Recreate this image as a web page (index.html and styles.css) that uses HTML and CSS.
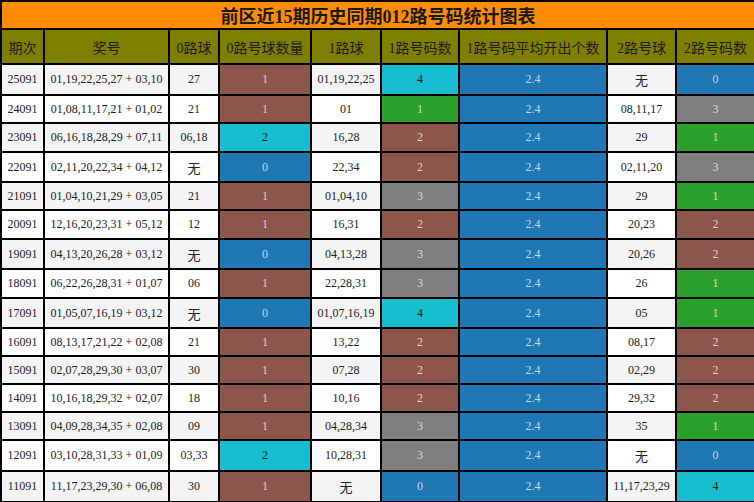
FILE: index.html
```html
<!DOCTYPE html>
<html lang="zh">
<head>
<meta charset="utf-8">
<title>前区近15期历史同期012路号码统计图表</title>
<link rel="stylesheet" href="styles.css">
</head>
<body>
<table class="chart">
  <colgroup>
    <col class="c1"><col class="c2"><col class="c3"><col class="c4"><col class="c5"><col class="c6"><col class="c7"><col class="c8"><col class="c9">
  </colgroup>
  <thead>
    <tr class="title-row"><th colspan="9" class="title">前区近15期历史同期012路号码统计图表</th></tr>
    <tr class="head-row">
      <th>期次</th><th>奖号</th><th>0路球</th><th>0路号球数量</th><th>1路球</th><th>1路号码数</th><th>1路号码平均开出个数</th><th>2路号球</th><th>2路号码数</th>
    </tr>
  </thead>
  <tbody>
    <tr class="odd tall"><td>25091</td><td>01,19,22,25,27 + 03,10</td><td>27</td><td class="brown">1</td><td>01,19,22,25</td><td class="cyan">4</td><td class="blue">2.4</td><td class="cjk">无</td><td class="blue">0</td></tr>
    <tr class="even"><td>24091</td><td>01,08,11,17,21 + 01,02</td><td>21</td><td class="brown">1</td><td>01</td><td class="green">1</td><td class="blue">2.4</td><td>08,11,17</td><td class="gray">3</td></tr>
    <tr class="odd mid"><td>23091</td><td>06,16,18,28,29 + 07,11</td><td>06,18</td><td class="cyan">2</td><td>16,28</td><td class="brown">2</td><td class="blue">2.4</td><td>29</td><td class="green">1</td></tr>
    <tr class="even tall2"><td>22091</td><td>02,11,20,22,34 + 04,12</td><td class="cjk">无</td><td class="blue">0</td><td>22,34</td><td class="brown">2</td><td class="blue">2.4</td><td>02,11,20</td><td class="gray">3</td></tr>
    <tr class="odd"><td>21091</td><td>01,04,10,21,29 + 03,05</td><td>21</td><td class="brown">1</td><td>01,04,10</td><td class="gray">3</td><td class="blue">2.4</td><td>29</td><td class="green">1</td></tr>
    <tr class="even mid"><td>20091</td><td>12,16,20,23,31 + 05,12</td><td>12</td><td class="brown">1</td><td>16,31</td><td class="brown">2</td><td class="blue">2.4</td><td>20,23</td><td class="brown">2</td></tr>
    <tr class="odd tall2"><td>19091</td><td>04,13,20,26,28 + 03,12</td><td class="cjk">无</td><td class="blue">0</td><td>04,13,28</td><td class="gray">3</td><td class="blue">2.4</td><td>20,26</td><td class="brown">2</td></tr>
    <tr class="even mid"><td>18091</td><td>06,22,26,28,31 + 01,07</td><td>06</td><td class="brown">1</td><td>22,28,31</td><td class="gray">3</td><td class="blue">2.4</td><td>26</td><td class="green">1</td></tr>
    <tr class="odd tall2"><td>17091</td><td>01,05,07,16,19 + 03,12</td><td class="cjk">无</td><td class="blue">0</td><td>01,07,16,19</td><td class="cyan">4</td><td class="blue">2.4</td><td>05</td><td class="green">1</td></tr>
    <tr class="even"><td>16091</td><td>08,13,17,21,22 + 02,08</td><td>21</td><td class="brown">1</td><td>13,22</td><td class="brown">2</td><td class="blue">2.4</td><td>08,17</td><td class="brown">2</td></tr>
    <tr class="odd"><td>15091</td><td>02,07,28,29,30 + 03,07</td><td>30</td><td class="brown">1</td><td>07,28</td><td class="brown">2</td><td class="blue">2.4</td><td>02,29</td><td class="brown">2</td></tr>
    <tr class="even"><td>14091</td><td>10,16,18,29,32 + 02,07</td><td>18</td><td class="brown">1</td><td>10,16</td><td class="brown">2</td><td class="blue">2.4</td><td>29,32</td><td class="brown">2</td></tr>
    <tr class="odd"><td>13091</td><td>04,09,28,34,35 + 02,08</td><td>09</td><td class="brown">1</td><td>04,28,34</td><td class="gray">3</td><td class="blue">2.4</td><td>35</td><td class="green">1</td></tr>
    <tr class="even tall"><td>12091</td><td>03,10,28,31,33 + 01,09</td><td>03,33</td><td class="cyan">2</td><td>10,28,31</td><td class="gray">3</td><td class="blue">2.4</td><td class="cjk">无</td><td class="blue">0</td></tr>
    <tr class="odd tall"><td>11091</td><td>11,17,23,29,30 + 06,08</td><td>30</td><td class="brown">1</td><td class="cjk">无</td><td class="blue">0</td><td class="blue">2.4</td><td>11,17,23,29</td><td class="cyan">4</td></tr>
  </tbody>
</table>
</body>
</html>
```
FILE: styles.css
```css
html, body {
  margin: 0;
  padding: 0;
  background: #ffffff;
}

.chart {
  width: 754px;
  table-layout: fixed;
  border-collapse: collapse;
  font-family: "Liberation Serif", "Noto Sans CJK SC", serif;
  font-size: 12px;
  color: #222222;
}

.c1 { width: 43px; }
.c2 { width: 125px; }
.c3 { width: 50px; }
.c4 { width: 92px; }
.c5 { width: 70px; }
.c6 { width: 78px; }
.c7 { width: 148px; }
.c8 { width: 69px; }
.c9 { width: 79px; }

.chart th,
.chart td {
  border: 2px solid #000000;
  padding: 0;
  text-align: center;
  vertical-align: middle;
  white-space: nowrap;
  overflow: hidden;
}

.title-row { height: 28px; }
.title {
  background: #ff8c00;
  font-size: 18px;
  font-weight: bold;
  color: #1a1a1a;
  letter-spacing: 0;
}

.head-row { height: 35px; }
.head-row th {
  background: #808000;
  font-weight: normal;
  font-size: 14px;
  color: #1e1e1e;
}

.chart tbody tr { height: 28px; }
.chart tbody tr.mid { height: 29px; }
.chart tbody tr.tall2 { height: 30px; }
.chart tbody tr.tall { height: 31px; }

.odd td { background: #f4f4f4; }
.even td { background: #ffffff; }

.cjk { font-size: 13px; }

.chart td.brown { background: #8c564b; color: rgba(255, 255, 255, 0.72); }
.chart td.blue { background: #1f77b4; color: rgba(255, 255, 255, 0.72); }
.chart td.green { background: #2ca02c; color: rgba(255, 255, 255, 0.72); }
.chart td.gray { background: #7f7f7f; color: rgba(255, 255, 255, 0.72); }
.chart td.cyan { background: #17becf; color: #1a1a1a; }
```
